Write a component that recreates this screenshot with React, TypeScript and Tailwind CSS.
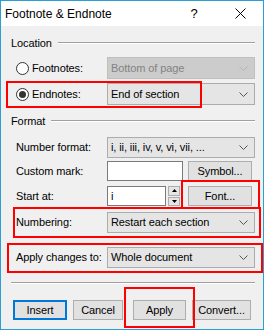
import React from "react";

const font = { fontFamily: '"Liberation Sans", Arial, sans-serif' };

function Chevron({ disabled }: { disabled?: boolean }) {
  return (
    <svg width="9" height="5" viewBox="0 0 9 5" className="shrink-0">
      <path d="M0.5 0.5 L4.5 4.5 L8.5 0.5" fill="none" stroke={disabled ? "#b4b4b4" : "#555555"} strokeWidth="1" />
    </svg>
  );
}

function Combo({ text, disabled, h = "h-[22px]" }: { text: string; disabled?: boolean; h?: string }) {
  return (
    <div
      className={`w-[148px] ${h} flex items-center justify-between pl-[3px] pr-[6px] border whitespace-nowrap ${
        disabled ? "bg-[#cccccc] border-[#bfbfbf] text-[#838383]" : "bg-[#e5e5e5] border-[#acacac] text-black"
      }`}
    >
      <span className="leading-none">{text}</span>
      <Chevron disabled={disabled} />
    </div>
  );
}

function Radio({ checked }: { checked?: boolean }) {
  return (
    <div className="w-[13px] h-[13px] rounded-full border border-[#333333] bg-white flex items-center justify-center shrink-0">
      {checked && <div className="w-[7px] h-[7px] rounded-full bg-[#333333]" />}
    </div>
  );
}

function Btn({ children, w, focus }: { children: React.ReactNode; w: string; focus?: boolean }) {
  return (
    <div
      className={`${w} h-[20px] flex items-center justify-center bg-[#e1e1e1] whitespace-nowrap ${
        focus ? "border-2 border-[#0078d7]" : "border border-[#adadad]"
      }`}
    >
      <span className="leading-none">{children}</span>
    </div>
  );
}

function Header({ label }: { label: string }) {
  return (
    <div className="flex items-center h-[16px] pl-[10px] pr-[8px]">
      <span className="leading-none">{label}</span>
      <div className="flex-1 ml-[6px] h-[2px] border-t border-[#a0a0a0] border-b border-b-white" />
    </div>
  );
}

export default function App() {
  return (
    <div
      style={font}
      className="relative w-[264px] h-[330px] border border-[#2b9fd3] bg-[#f0f0f0] text-[11px] tracking-[-0.1px] text-black flex flex-col overflow-hidden"
    >
      {/* title bar */}
      <div className="h-[25px] bg-white flex items-center pl-[4px] shrink-0 tracking-normal">
        <span className="leading-none text-[12px] whitespace-nowrap">Footnote &amp; Endnote</span>
        <div className="ml-auto w-[46px] flex justify-center">
          <span className="leading-none text-[13px]">?</span>
        </div>
        <div className="w-[46px] flex justify-center">
          <svg width="11" height="11" viewBox="0 0 11 11">
            <path d="M0.5 0.5 L10.5 10.5 M10.5 0.5 L0.5 10.5" stroke="#000" strokeWidth="1" />
          </svg>
        </div>
      </div>

      <div className="mt-[9px]">
        <Header label="Location" />
      </div>

      {/* Footnotes */}
      <div className="mt-[6px] flex items-center h-[22px] pl-[15px]">
        <div className="w-[91px] flex items-center gap-[3px] whitespace-nowrap">
          <Radio />
          <span className="leading-none">Footnotes:</span>
        </div>
        <Combo text="Bottom of page" disabled />
      </div>

      {/* Endnotes */}
      <div className="mt-[4px] flex items-center h-[22px] pl-[15px]">
        <div className="w-[91px] flex items-center gap-[3px] whitespace-nowrap">
          <Radio checked />
          <span className="leading-none">Endnotes:</span>
        </div>
        <Combo text="End of section" />
      </div>

      <div className="mt-[8px]">
        <Header label="Format" />
      </div>

      {/* Number format */}
      <div className="mt-[8px] flex items-center h-[21px] pl-[15px]">
        <div className="w-[91px] leading-none whitespace-nowrap">Number format:</div>
        <Combo text="i, ii, iii, iv, v, vi, vii, ..." h="h-[21px]" />
      </div>

      {/* Custom mark */}
      <div className="mt-[3px] flex items-center h-[20px] pl-[15px]">
        <div className="w-[91px] leading-none whitespace-nowrap">Custom mark:</div>
        <div className="w-[76px] h-[20px] bg-white border border-[#7a7a7a]" />
        <div className="ml-[5px]">
          <Btn w="w-[64px]">Symbol...</Btn>
        </div>
      </div>

      {/* Start at */}
      <div className="mt-[5px] flex items-center h-[20px] pl-[15px]">
        <div className="w-[91px] leading-none whitespace-nowrap">Start at:</div>
        <div className="w-[59px] h-[20px] bg-white border border-[#7a7a7a] flex items-center pl-[3px]">
          <span className="leading-none">i</span>
        </div>
        <div className="ml-[2px] w-[12px] h-[20px] flex flex-col gap-[1px]">
          <div className="flex-1 bg-[#e5e5e5] border border-[#acacac] flex items-center justify-center">
            <svg width="5" height="3" viewBox="0 0 5 3"><path d="M0 3 L2.5 0 L5 3 Z" fill="#000" /></svg>
          </div>
          <div className="flex-1 bg-[#e5e5e5] border border-[#acacac] flex items-center justify-center">
            <svg width="5" height="3" viewBox="0 0 5 3"><path d="M0 0 L2.5 3 L5 0 Z" fill="#000" /></svg>
          </div>
        </div>
        <div className="ml-[8px]">
          <Btn w="w-[64px]">Font...</Btn>
        </div>
      </div>

      {/* Numbering */}
      <div className="mt-[6px] flex items-center h-[21px] pl-[15px]">
        <div className="w-[91px] leading-none whitespace-nowrap">Numbering:</div>
        <Combo text="Restart each section" h="h-[21px]" />
      </div>

      {/* Apply changes to */}
      <div className="mt-[14px] flex items-center h-[21px] pl-[15px]">
        <div className="w-[91px] leading-none whitespace-nowrap">Apply changes to:</div>
        <Combo text="Whole document" h="h-[21px]" />
      </div>

      {/* separator */}
      <div className="mt-[14px] ml-[10px] mr-[8px] h-[2px] border-t border-[#a0a0a0] border-b border-b-white" />

      {/* buttons */}
      <div className="mt-[16px] flex pl-[12px]">
        <Btn w="w-[54px]" focus>Insert</Btn>
        <div className="ml-[6px]"><Btn w="w-[50px]">Cancel</Btn></div>
        <div className="ml-[10px]"><Btn w="w-[53px]">Apply</Btn></div>
        <div className="ml-[6px]"><Btn w="w-[59px]">Convert...</Btn></div>
      </div>

      {/* red annotation boxes */}
      <div className="absolute left-[5px] top-[80px] w-[196px] h-[27px] border-2 border-[#ff0000]" />
      <div className="absolute left-[180px] top-[179px] w-[79px] h-[29px] border-2 border-[#ff0000]" />
      <div className="absolute left-[12px] top-[206px] w-[248px] h-[31px] border-2 border-[#ff0000]" />
      <div className="absolute left-[6px] top-[242px] w-[256px] h-[30px] border-2 border-[#ff0000]" />
      <div className="absolute left-[123px] top-[286px] w-[71px] h-[41px] border-2 border-[#ff0000]" />
    </div>
  );
}
